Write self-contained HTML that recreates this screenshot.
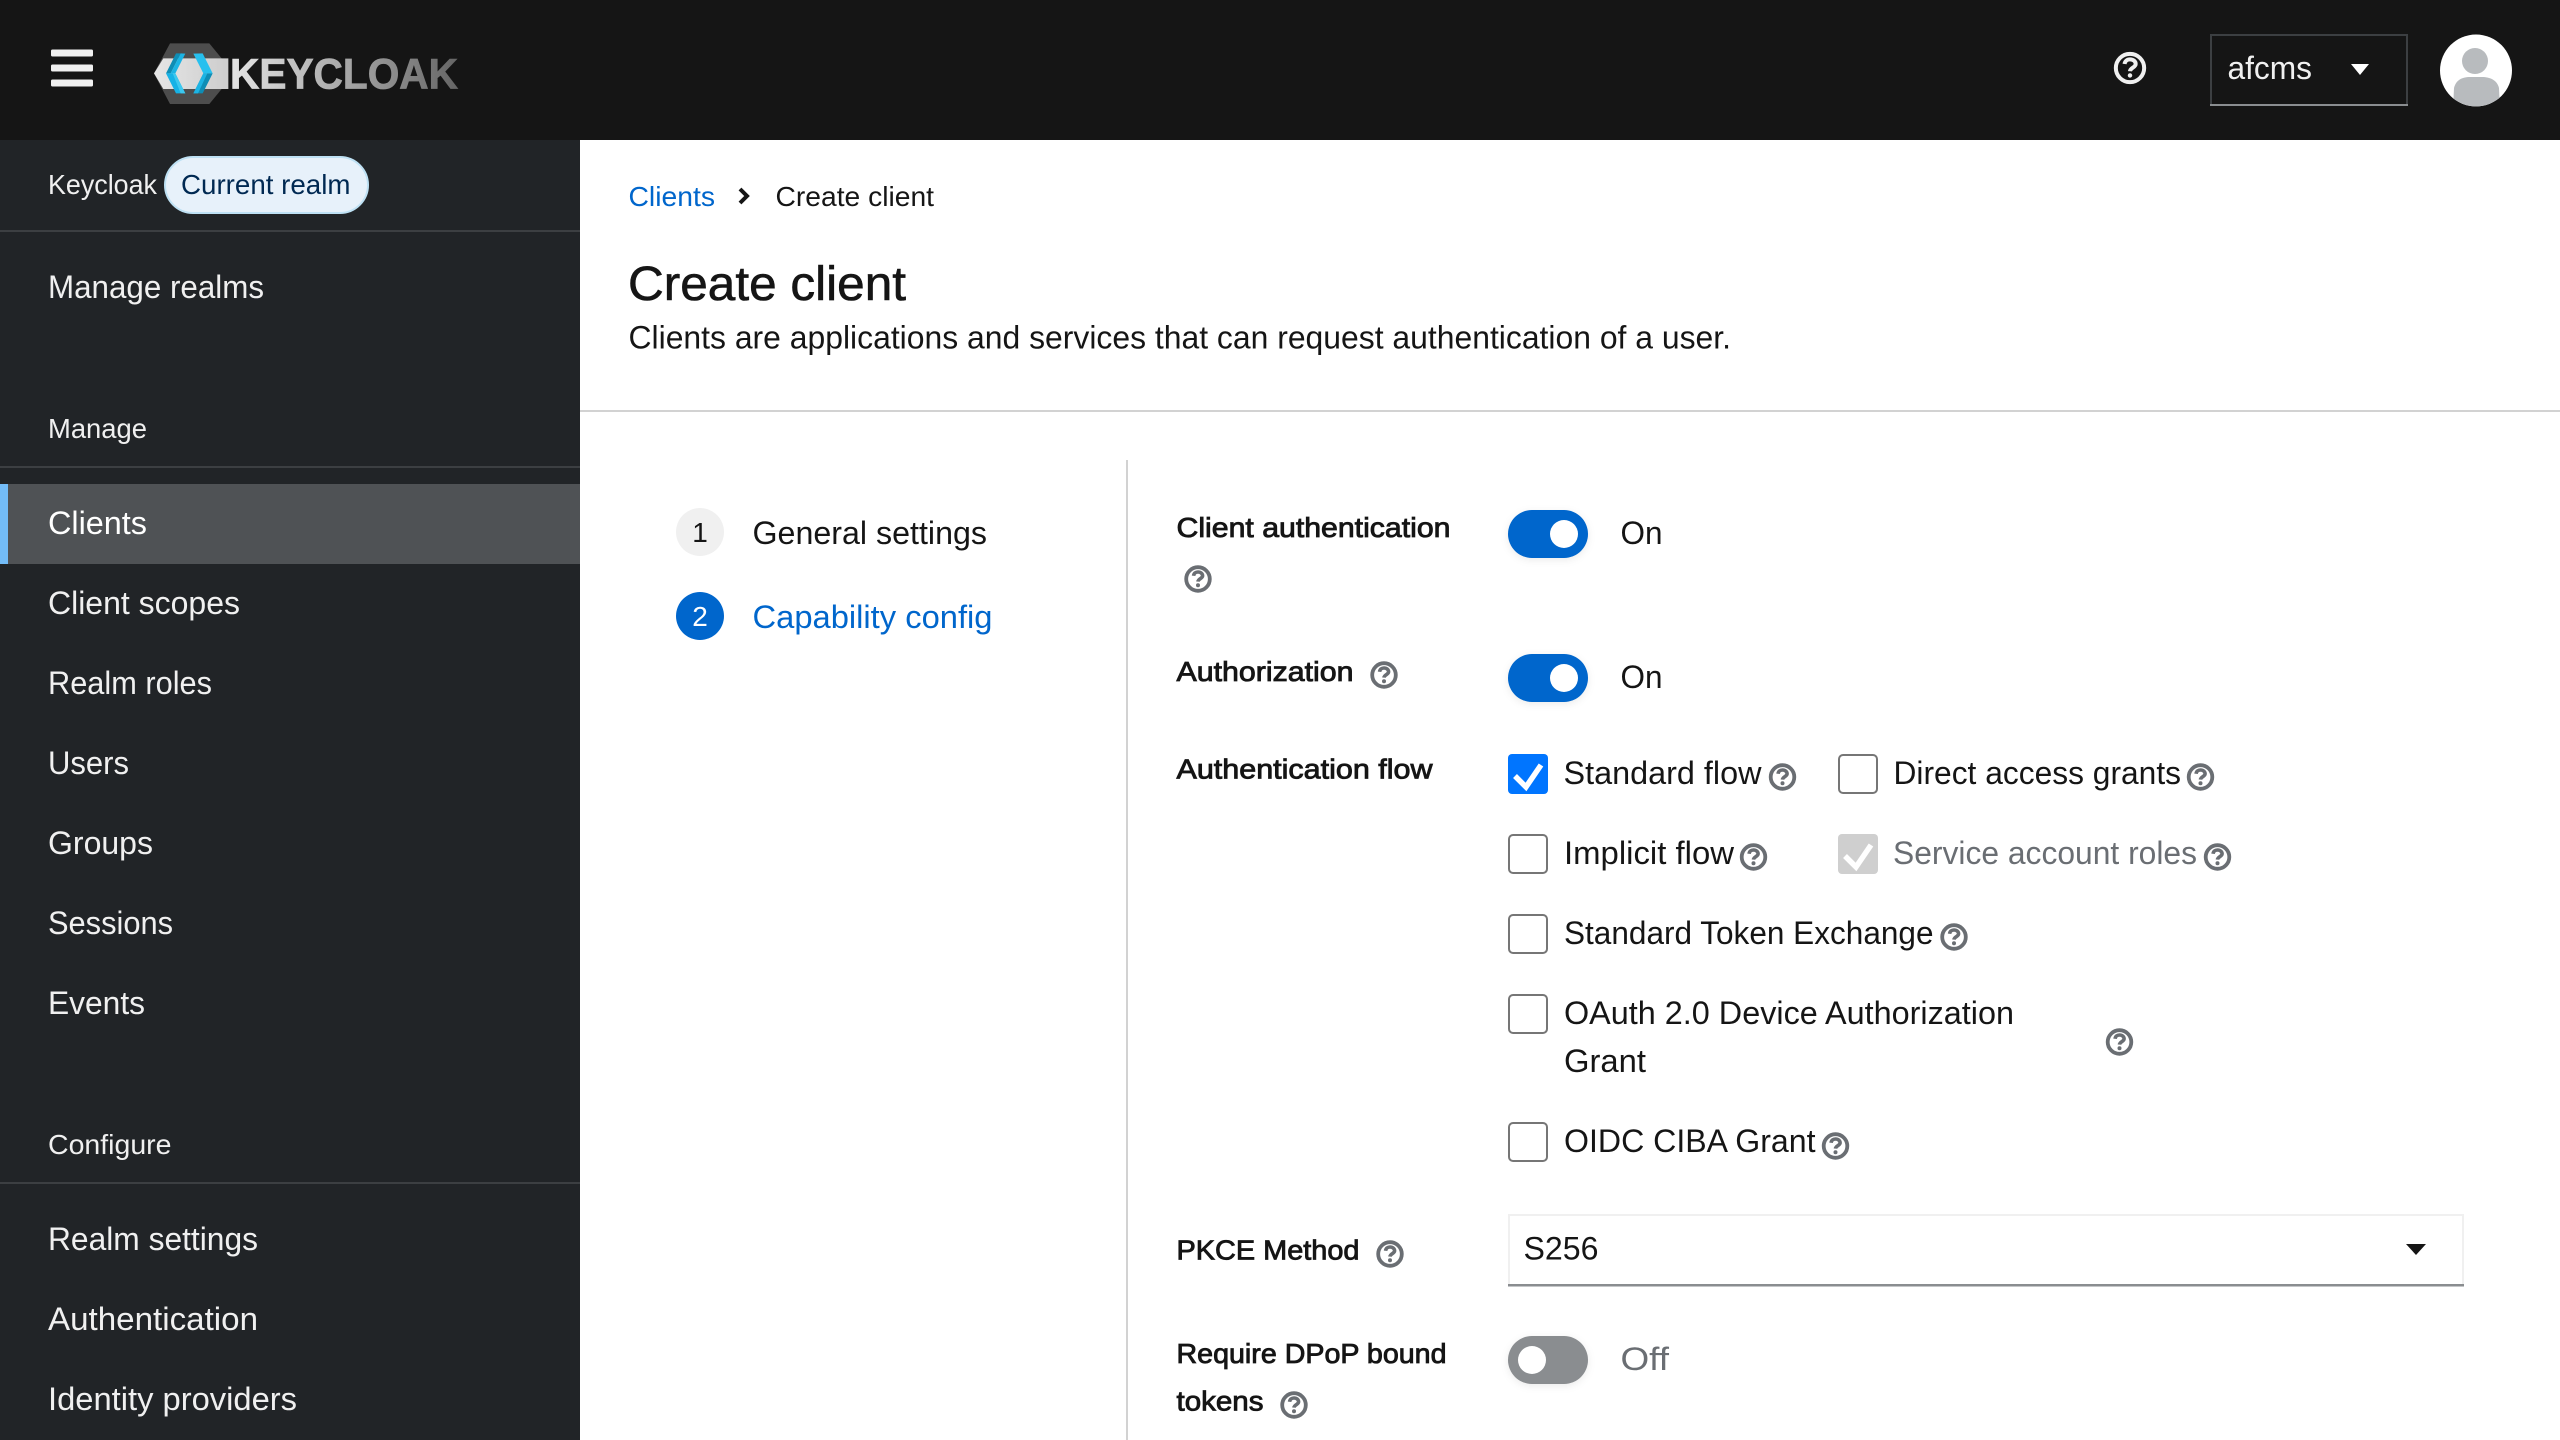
<!DOCTYPE html>
<html lang="en"><head><meta charset="utf-8"><title>Create client</title>
<style>
html,body{margin:0;padding:0;background:#fff;width:2560px;height:1440px;overflow:hidden}
svg{display:block}
text{font-family:"Liberation Sans",sans-serif;font-size:32px;fill:#151515;white-space:pre}
.n{fill:#f0f0f0}
.s{font-size:28px}
.l{font-size:28px;stroke:#151515;stroke-width:.85}
.d{fill:#6a6e73}
.h circle.o{fill:none;stroke:#6a6e73;stroke-width:3.8}
.h path{fill:none;stroke:#6a6e73;stroke-width:3.6}
.h circle.p{fill:#6a6e73}
.b{fill:#fff;stroke:#767676;stroke-width:2}
</style></head><body>
<svg xmlns="http://www.w3.org/2000/svg" width="2560" height="1440" viewBox="0 0 2560 1440">
<defs>
<linearGradient id="kg" gradientUnits="userSpaceOnUse" x1="231" y1="0" x2="457" y2="0"><stop offset="0" stop-color="#e4e4e4"/><stop offset=".5" stop-color="#a8a8a8"/><stop offset="1" stop-color="#666"/></linearGradient>
<linearGradient id="bg" x1="0" y1="0" x2="1" y2="0"><stop offset="0" stop-color="#e6e6e6"/><stop offset="1" stop-color="#cdcdcd"/></linearGradient>
<clipPath id="av"><circle cx="2476" cy="70.5" r="36"/></clipPath>
</defs>
<rect width="2560" height="1440" fill="#fff"/>

<!-- header -->
<rect width="2560" height="140" fill="#151515"/>
<rect x="51" y="49.5" width="42" height="7" rx="1.5" fill="#f0f0f0"/>
<rect x="51" y="64.5" width="42" height="7" rx="1.5" fill="#f0f0f0"/>
<rect x="51" y="79.5" width="42" height="7" rx="1.5" fill="#f0f0f0"/>
<g transform="translate(140,30) scale(.33333)">
<polygon points="90,40 208,40 245,85 245,177 208,222 90,222 42,130" fill="#4d4d4d"/>
<polygon points="42,130 70,85 265,85 265,177 70,177" fill="url(#bg)"/>
<polygon points="108,70 122,70 92,130 78,130" fill="#0e8db5"/>
<polygon points="122,70 136,71 106,130 92,130" fill="#1cb4e4"/>
<polygon points="78,130 106,130 136,190 108,190" fill="#16b2e6"/>
<polygon points="98,130 106,130 136,190 122,190" fill="#3cc8ef"/>
<polygon points="188,70 160,71 190,130 218,130" fill="#27c0ee"/>
<polygon points="218,130 190,130 160,190 188,190" fill="#0e8db5"/>
<polygon points="190,130 202,130 174,190 160,190" fill="#1cb4e4"/>
</g>
<text x="230" y="88.5" textLength="228" lengthAdjust="spacingAndGlyphs" style="font-size:43px;font-weight:bold;fill:url(#kg);stroke:url(#kg);stroke-width:.8">KEYCLOAK</text>
<g transform="translate(2130,68) scale(1.18)">
<circle r="12" style="fill:none;stroke:#f0f0f0;stroke-width:3.4"/>
<path d="M-4.6-3.4C-4.3-6-2.3-7.3 0-7.3 2.8-7.3 4.8-5.6 4.8-3.4 4.8-.4 .2-.4 0 2.8" style="fill:none;stroke:#f0f0f0;stroke-width:3.4"/>
<circle cy="6.3" r="1.9" style="fill:#f0f0f0"/>
</g>
<rect x="2211" y="35" width="196" height="70" fill="#151515" stroke="#3c3f42" stroke-width="2"/>
<rect x="2210" y="104" width="198" height="2" fill="#8a8d90"/>
<text class="n" x="2227.5" y="79" textLength="84.5" lengthAdjust="spacingAndGlyphs">afcms</text>
<polygon points="2351,64 2369,64 2360,75" fill="#fff"/>
<circle cx="2476" cy="70.5" r="36" fill="#fff"/>
<g clip-path="url(#av)">
<circle cx="2475" cy="61" r="13" fill="#b8bbbe"/>
<path d="M2453 110L2454 88C2456 80 2462 77 2470 77H2482C2490 77 2497 80 2499 88L2500 110Z" fill="#b8bbbe"/>
</g>

<!-- sidebar -->
<rect y="140" width="580" height="1300" fill="#212427"/>
<text class="n s" x="48" y="194" textLength="109" lengthAdjust="spacingAndGlyphs">Keycloak</text>
<rect x="165" y="157" width="203" height="56" rx="28" fill="#e7f1fa" stroke="#bee1f4" stroke-width="2"/>
<text class="s" x="181" y="194" textLength="169.5" lengthAdjust="spacingAndGlyphs" style="fill:#002952">Current realm</text>
<rect y="230" width="580" height="2" fill="#3c3f42"/>
<text class="n" x="48" y="298" textLength="216" lengthAdjust="spacingAndGlyphs">Manage realms</text>
<text class="n s" x="48" y="438" textLength="99" lengthAdjust="spacingAndGlyphs">Manage</text>
<rect y="466" width="580" height="2" fill="#3c3f42"/>
<rect y="484" width="580" height="80" fill="#4f5255"/>
<rect y="484" width="8" height="80" fill="#73bcf7"/>
<text x="48" y="534" textLength="99" lengthAdjust="spacingAndGlyphs" style="fill:#fff">Clients</text>
<text class="n" x="48" y="614" textLength="192" lengthAdjust="spacingAndGlyphs">Client scopes</text>
<text class="n" x="48" y="694" textLength="164" lengthAdjust="spacingAndGlyphs">Realm roles</text>
<text class="n" x="48" y="774" textLength="81" lengthAdjust="spacingAndGlyphs">Users</text>
<text class="n" x="48" y="854" textLength="105" lengthAdjust="spacingAndGlyphs">Groups</text>
<text class="n" x="48" y="934" textLength="125" lengthAdjust="spacingAndGlyphs">Sessions</text>
<text class="n" x="48" y="1014" textLength="97" lengthAdjust="spacingAndGlyphs">Events</text>
<text class="n s" x="48" y="1154" textLength="123.5" lengthAdjust="spacingAndGlyphs">Configure</text>
<rect y="1182" width="580" height="2" fill="#3c3f42"/>
<text class="n" x="48" y="1250" textLength="210" lengthAdjust="spacingAndGlyphs">Realm settings</text>
<text class="n" x="48" y="1330" textLength="210" lengthAdjust="spacingAndGlyphs">Authentication</text>
<text class="n" x="48" y="1410" textLength="249" lengthAdjust="spacingAndGlyphs">Identity providers</text>

<!-- page head -->
<text class="s" x="628.5" y="206" textLength="86.5" lengthAdjust="spacingAndGlyphs" style="fill:#06c">Clients</text>
<polyline points="740,189 747,196 740,203" fill="none" stroke="#151515" stroke-width="4"/>
<text class="s" x="775.5" y="206" textLength="158.5" lengthAdjust="spacingAndGlyphs">Create client</text>
<text x="628" y="300" textLength="278" lengthAdjust="spacingAndGlyphs" style="font-size:48px;stroke:#151515;stroke-width:.6">Create client</text>
<text x="628.5" y="348.5" textLength="1102.5" lengthAdjust="spacingAndGlyphs">Clients are applications and services that can request authentication of a user.</text>
<rect x="580" y="410" width="1980" height="2" fill="#d2d2d2"/>

<!-- wizard nav -->
<circle cx="700" cy="532" r="24" fill="#f0f0f0"/>
<text class="s" x="700" y="542" text-anchor="middle">1</text>
<text x="752.5" y="544" textLength="234.5" lengthAdjust="spacingAndGlyphs">General settings</text>
<circle cx="700" cy="616" r="24" fill="#06c"/>
<text class="s" x="700" y="626" text-anchor="middle" style="fill:#fff">2</text>
<text x="752.5" y="628" textLength="240" lengthAdjust="spacingAndGlyphs" style="fill:#06c">Capability config</text>
<rect x="1126" y="460" width="2" height="980" fill="#d2d2d2"/>

<!-- form -->
<text class="l" x="1176.5" y="537" textLength="274" lengthAdjust="spacingAndGlyphs">Client authentication</text>
<g class="h" transform="translate(1198,579)"><circle class="o" r="11.8"/><path d="M-4.4-3.2C-4.1-5.8-2.2-7 0-7 2.7-7 4.6-5.4 4.6-3.2 4.6-.4 .2-.4 0 2.6"/><circle class="p" cy="6.2" r="2"/></g>
<rect x="1508" y="510" width="80" height="48" rx="24" fill="#06c" style="filter:drop-shadow(0 2px 4px rgba(0,0,0,.08))"/>
<circle cx="1564" cy="534" r="14" fill="#fff"/>
<text x="1620.5" y="544" textLength="42" lengthAdjust="spacingAndGlyphs">On</text>

<text class="l" x="1176.5" y="681" textLength="177" lengthAdjust="spacingAndGlyphs">Authorization</text>
<g class="h" transform="translate(1384,675)"><circle class="o" r="11.8"/><path d="M-4.4-3.2C-4.1-5.8-2.2-7 0-7 2.7-7 4.6-5.4 4.6-3.2 4.6-.4 .2-.4 0 2.6"/><circle class="p" cy="6.2" r="2"/></g>
<rect x="1508" y="654" width="80" height="48" rx="24" fill="#06c" style="filter:drop-shadow(0 2px 4px rgba(0,0,0,.08))"/>
<circle cx="1564" cy="678" r="14" fill="#fff"/>
<text x="1620.5" y="688" textLength="42" lengthAdjust="spacingAndGlyphs">On</text>

<text class="l" x="1176.5" y="778.5" textLength="256" lengthAdjust="spacingAndGlyphs">Authentication flow</text>

<rect x="1508" y="754" width="40" height="40" rx="4" fill="#0075ff"/>
<polyline points="1515,776 1526,787 1541,765" fill="none" stroke="#fff" stroke-width="5.5"/>
<text x="1563.5" y="784" textLength="198" lengthAdjust="spacingAndGlyphs">Standard flow</text>
<g class="h" transform="translate(1782.5,777)"><circle class="o" r="11.8"/><path d="M-4.4-3.2C-4.1-5.8-2.2-7 0-7 2.7-7 4.6-5.4 4.6-3.2 4.6-.4 .2-.4 0 2.6"/><circle class="p" cy="6.2" r="2"/></g>

<rect class="b" x="1839" y="755" width="38" height="38" rx="4"/>
<text x="1893.5" y="784" textLength="287.5" lengthAdjust="spacingAndGlyphs">Direct access grants</text>
<g class="h" transform="translate(2200.5,777)"><circle class="o" r="11.8"/><path d="M-4.4-3.2C-4.1-5.8-2.2-7 0-7 2.7-7 4.6-5.4 4.6-3.2 4.6-.4 .2-.4 0 2.6"/><circle class="p" cy="6.2" r="2"/></g>

<rect class="b" x="1509" y="835" width="38" height="38" rx="4"/>
<text x="1564" y="864" textLength="170" lengthAdjust="spacingAndGlyphs">Implicit flow</text>
<g class="h" transform="translate(1753.5,857)"><circle class="o" r="11.8"/><path d="M-4.4-3.2C-4.1-5.8-2.2-7 0-7 2.7-7 4.6-5.4 4.6-3.2 4.6-.4 .2-.4 0 2.6"/><circle class="p" cy="6.2" r="2"/></g>

<rect x="1838" y="834" width="40" height="40" rx="4" fill="#cfcfcf"/>
<polyline points="1845,856 1856,867 1871,845" fill="none" stroke="#fff" stroke-width="5.5"/>
<text class="d" x="1893" y="864" textLength="304" lengthAdjust="spacingAndGlyphs">Service account roles</text>
<g class="h" transform="translate(2217.5,857)"><circle class="o" r="11.8"/><path d="M-4.4-3.2C-4.1-5.8-2.2-7 0-7 2.7-7 4.6-5.4 4.6-3.2 4.6-.4 .2-.4 0 2.6"/><circle class="p" cy="6.2" r="2"/></g>

<rect class="b" x="1509" y="915" width="38" height="38" rx="4"/>
<text x="1564" y="944" textLength="369.5" lengthAdjust="spacingAndGlyphs">Standard Token Exchange</text>
<g class="h" transform="translate(1954,937)"><circle class="o" r="11.8"/><path d="M-4.4-3.2C-4.1-5.8-2.2-7 0-7 2.7-7 4.6-5.4 4.6-3.2 4.6-.4 .2-.4 0 2.6"/><circle class="p" cy="6.2" r="2"/></g>

<rect class="b" x="1509" y="995" width="38" height="38" rx="4"/>
<text x="1564" y="1024" textLength="450" lengthAdjust="spacingAndGlyphs">OAuth 2.0 Device Authorization</text>
<text x="1564" y="1072" textLength="82" lengthAdjust="spacingAndGlyphs">Grant</text>
<g class="h" transform="translate(2119.5,1042)"><circle class="o" r="11.8"/><path d="M-4.4-3.2C-4.1-5.8-2.2-7 0-7 2.7-7 4.6-5.4 4.6-3.2 4.6-.4 .2-.4 0 2.6"/><circle class="p" cy="6.2" r="2"/></g>

<rect class="b" x="1509" y="1123" width="38" height="38" rx="4"/>
<text x="1564" y="1152" textLength="251.5" lengthAdjust="spacingAndGlyphs">OIDC CIBA Grant</text>
<g class="h" transform="translate(1835.5,1146)"><circle class="o" r="11.8"/><path d="M-4.4-3.2C-4.1-5.8-2.2-7 0-7 2.7-7 4.6-5.4 4.6-3.2 4.6-.4 .2-.4 0 2.6"/><circle class="p" cy="6.2" r="2"/></g>

<text class="l" x="1176.5" y="1259.5" textLength="183" lengthAdjust="spacingAndGlyphs">PKCE Method</text>
<g class="h" transform="translate(1390,1254)"><circle class="o" r="11.8"/><path d="M-4.4-3.2C-4.1-5.8-2.2-7 0-7 2.7-7 4.6-5.4 4.6-3.2 4.6-.4 .2-.4 0 2.6"/><circle class="p" cy="6.2" r="2"/></g>
<rect x="1509" y="1215" width="954" height="70" fill="#fff" stroke="#f0f0f0" stroke-width="2"/>
<rect x="1508" y="1284" width="956" height="2.5" fill="#8a8d90"/>
<text x="1523.5" y="1259.5" textLength="75" lengthAdjust="spacingAndGlyphs">S256</text>
<polygon points="2406,1244 2426,1244 2416,1255" fill="#151515"/>

<text class="l" x="1176.5" y="1363" textLength="270" lengthAdjust="spacingAndGlyphs">Require DPoP bound</text>
<text class="l" x="1176.5" y="1410.5" textLength="87" lengthAdjust="spacingAndGlyphs">tokens</text>
<g class="h" transform="translate(1294,1405)"><circle class="o" r="11.8"/><path d="M-4.4-3.2C-4.1-5.8-2.2-7 0-7 2.7-7 4.6-5.4 4.6-3.2 4.6-.4 .2-.4 0 2.6"/><circle class="p" cy="6.2" r="2"/></g>
<rect x="1508" y="1336" width="80" height="48" rx="24" fill="#8a8d90" style="filter:drop-shadow(0 2px 4px rgba(0,0,0,.08))"/>
<circle cx="1532" cy="1360" r="14" fill="#fff"/>
<text class="d" x="1620.5" y="1370" textLength="48.5" lengthAdjust="spacingAndGlyphs">Off</text>
</svg>
</body></html>
